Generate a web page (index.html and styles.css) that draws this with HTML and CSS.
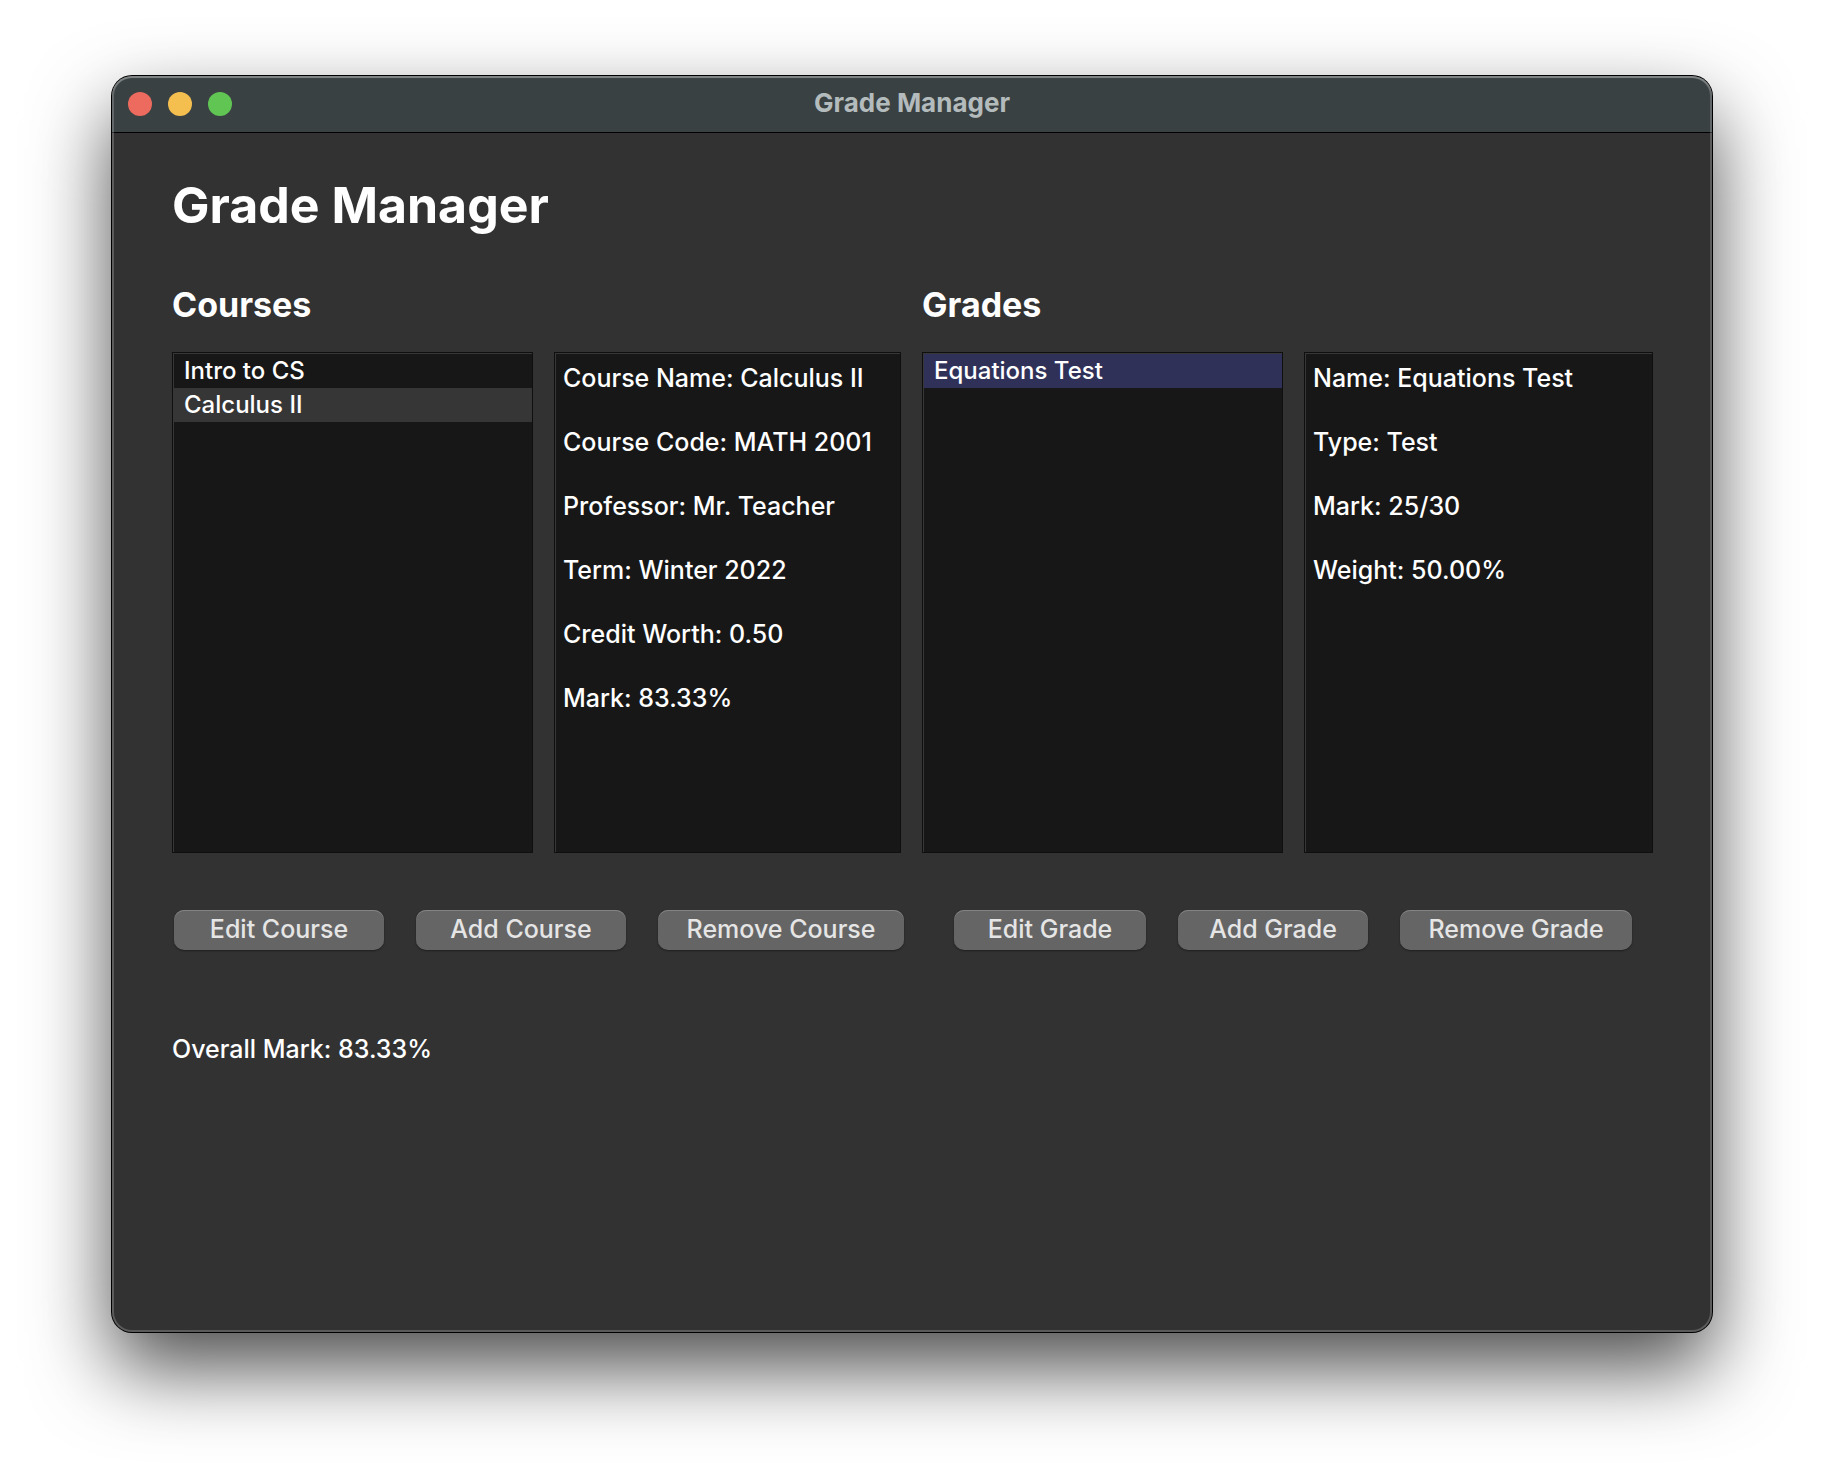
FILE: index.html
```html
<!DOCTYPE html>
<html lang="en">
<head>
<meta charset="utf-8">
<meta name="viewport" content="width=device-width, initial-scale=1">
<title>Grade Manager</title>
<link rel="stylesheet" href="styles.css">
</head>
<body>
<div class="window">
  <header class="titlebar">
    <div class="lights">
      <button type="button" class="light light-close" aria-label="Close"></button>
      <button type="button" class="light light-minimize" aria-label="Minimize"></button>
      <button type="button" class="light light-zoom" aria-label="Zoom"></button>
    </div>
    <div class="titlebar-text">Grade Manager</div>
  </header>
  <main class="content">
    <h1 class="heading">Grade Manager</h1>
    <div class="board">
      <h2 class="subheading" id="courses">Courses</h2>
      <h2 class="subheading" id="grades">Grades</h2>
      <ul class="panel list" role="listbox" aria-labelledby="courses">
        <li class="item" role="option" aria-selected="false">Intro to CS</li>
        <li class="item item-inactive" role="option" aria-selected="true">Calculus II</li>
      </ul>
      <div class="panel details">
        <p class="detail">Course Name: Calculus II</p>
        <p class="detail">Course Code: MATH 2001</p>
        <p class="detail">Professor: Mr. Teacher</p>
        <p class="detail">Term: Winter 2022</p>
        <p class="detail">Credit Worth: 0.50</p>
        <p class="detail">Mark: 83.33%</p>
      </div>
      <ul class="panel list" role="listbox" aria-labelledby="grades">
        <li class="item item-active" role="option" aria-selected="true">Equations Test</li>
      </ul>
      <div class="panel details">
        <p class="detail">Name: Equations Test</p>
        <p class="detail">Type: Test</p>
        <p class="detail">Mark: 25/30</p>
        <p class="detail">Weight: 50.00%</p>
      </div>
    </div>
    <div class="actions">
      <div class="group group-courses">
        <button type="button" class="button">Edit Course</button>
        <button type="button" class="button">Add Course</button>
        <button type="button" class="button">Remove Course</button>
      </div>
      <div class="group group-grades">
        <button type="button" class="button">Edit Grade</button>
        <button type="button" class="button">Add Grade</button>
        <button type="button" class="button">Remove Grade</button>
      </div>
    </div>
    <p class="overall">Overall Mark: 83.33%</p>
  </main>
</div>
</body>
</html>
```
FILE: styles.css
```css
* {
  box-sizing: border-box;
}

body {
  margin: 0;
  min-height: 100vh;
  padding: 76px 112px 148px;
  display: flex;
  background: #fff;
  color: #fff;
  font-family: Inter, "Liberation Sans", sans-serif;
  font-size: 25px;
  font-weight: 450;
  line-height: 32px;
}

h1, h2, p, ul {
  margin: 0;
  padding: 0;
}

.window {
  position: relative;
  flex: 1;
  min-width: 0;
  display: flex;
  flex-direction: column;
  border-radius: 20px;
  background: #323232;
  box-shadow: 0 0 0 1px #000, 0 36px 80px rgba(0, 0, 0, 0.7);
}

/* light rim along the inner window edge */
.window::after {
  content: "";
  position: absolute;
  inset: 0;
  border-radius: 20px;
  box-shadow: inset 0 0 0 2px rgba(255, 255, 255, 0.2), inset 0 2px 1px rgba(255, 255, 255, 0.2);
  pointer-events: none;
}

.titlebar {
  display: grid;
  grid-template-columns: 1fr auto 1fr;
  align-items: center;
  height: 57px;
  padding: 0 16px 2px;
  border-bottom: 1px solid #000;
  border-radius: 20px 20px 0 0;
  background: #3a4142;
}

.lights {
  display: flex;
  gap: 16px;
  padding-top: 2px;
}

.light {
  width: 24px;
  height: 24px;
  padding: 0;
  border: 0;
  border-radius: 50%;
}

.light-close { background: #ed6a5e; }
.light-minimize { background: #f5bf4f; }
.light-zoom { background: #61c554; }

.titlebar-text {
  color: #b3bbbc;
  font-size: 26px;
  font-weight: 700;
}

.content {
  padding: 40px 59px 48px 60px;
}

.heading {
  font-size: 50px;
  line-height: 64px;
  font-weight: 700;
}

.board {
  display: grid;
  grid-template-columns: 361fr 347fr 361fr 349fr;
  column-gap: 21px;
  row-gap: 27px;
  margin-top: 48px;
}

.subheading {
  grid-column: span 2;
  font-size: 34px;
  line-height: 40px;
  font-weight: 700;
}

.panel {
  min-height: 501px;
  border: 1px solid #0f0f0f;
  background: #171717;
  box-shadow: inset 1px 1px 0 #373737;
}

.list {
  padding: 1px 0 0 1px;
  list-style: none;
}

.item {
  padding: 0 10px;
  font-size: 24px;
  line-height: 34px;
}

.item-inactive { background: #363636; }
.item-active { background: #303159; }

.details {
  display: flex;
  flex-direction: column;
  gap: 32px;
  padding: 9px 8px;
}

.actions {
  display: grid;
  grid-template-columns: 730fr 678fr;
  gap: 50px;
  margin-top: 57px;
  padding: 0 21px 0 2px;
}

.group {
  display: grid;
  gap: 32px;
}

.group-courses { grid-template-columns: 210fr 210fr 246fr; }
.group-grades { grid-template-columns: 192fr 190fr 232fr; }

.button {
  height: 40px;
  padding: 0 0 2px;
  border: 0;
  border-radius: 10px;
  background: #656565;
  box-shadow: inset 0 1px 0 #848484, 0 1px 2px rgba(0, 0, 0, 0.4);
  color: #e5e5e5;
  font: inherit;
  white-space: nowrap;
}

.overall {
  margin-top: 83px;
}
```
